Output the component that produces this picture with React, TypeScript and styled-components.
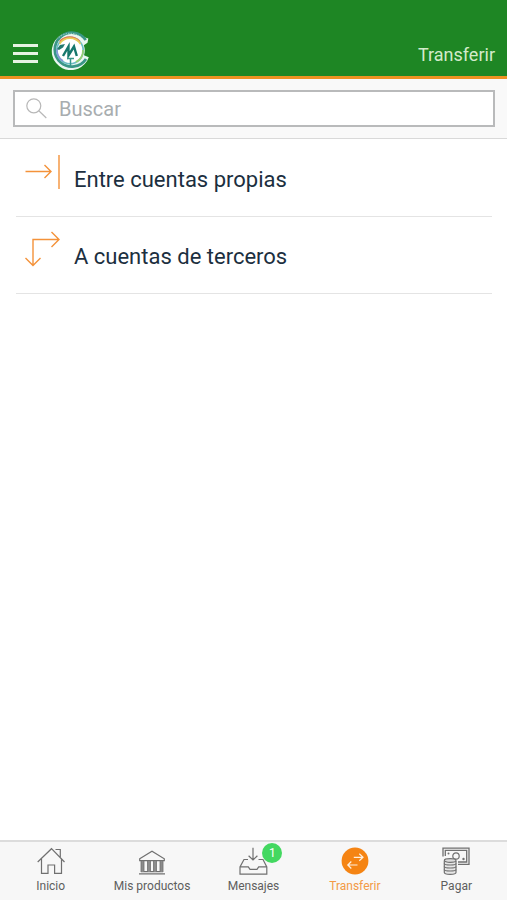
import React from "react";
import styled, { createGlobalStyle } from "styled-components";

const GlobalStyle = createGlobalStyle`
  * { box-sizing: border-box; }
  body {
    margin: 0;
    background: #fff;
    font-family: Roboto, "Open Sans", sans-serif;
  }
`;

const Screen = styled.div`
  display: flex;
  flex-direction: column;
  min-height: 100vh;
`;

const Header = styled.header`
  display: flex;
  align-items: center;
  gap: 12px;
  padding: 30px 12px 6px 13px;
  background: #1e8624;
  border-bottom: 3px solid #ee9222;
`;

const MenuButton = styled.button`
  display: flex;
  flex-direction: column;
  gap: 5px;
  width: 25px;
  padding: 7px 0 0;
  border: 0;
  background: none;
`;

const MenuLine = styled.span`
  height: 3px;
  background: #e6f3e2;
`;

const Title = styled.h1`
  margin: 10px 0 0 auto;
  color: #d3ebcb;
  font-size: 18px;
  font-weight: 400;
  line-height: 24px;
`;

const SearchBar = styled.div`
  padding: 11px 12px 11px 13px;
  background: #f9f9f9;
  border-bottom: 1px solid #d9d9d9;
`;

const SearchField = styled.label`
  display: flex;
  align-items: center;
  gap: 12px;
  height: 37px;
  padding: 0 11px;
  border: 2px solid #b9babb;
  background: #fff;
`;

const SearchInput = styled.input`
  flex: 1;
  min-width: 0;
  padding: 0;
  border: 0;
  outline: 0;
  background: none;
  color: #1c2f40;
  font: 400 20px/28px Roboto, "Open Sans", sans-serif;

  &::placeholder {
    color: #a8adaf;
    opacity: 1;
  }
`;

const OptionList = styled.main`
  flex: 1;
  padding: 1px 15px 0 16px;
`;

const Option = styled.a`
  display: flex;
  gap: 14px;
  height: 77px;
  padding: 14px 0 0 8px;
  border-bottom: 1px solid #e4e4e4;
  color: #1c2f40;
  font-size: 22px;
  line-height: 28px;
  text-decoration: none;
`;

const OptionText = styled.span`
  padding-top: 12px;
`;

const TabBar = styled.nav`
  display: grid;
  grid-template-columns: repeat(5, 1fr);
  height: 60px;
  border-top: 2px solid #dcdcdc;
  background: #f7f7f7;
`;

const Tab = styled.a<{ $active?: boolean }>`
  display: flex;
  flex-direction: column;
  align-items: center;
  gap: 3px;
  padding-top: 5px;
  color: ${(p) => (p.$active ? "#f39a45" : "#5e5e5e")};
  font-size: 12px;
  line-height: 16px;
  text-decoration: none;
  white-space: nowrap;
`;

const IconHolder = styled.span`
  position: relative;
  display: flex;
`;

const Badge = styled.span`
  position: absolute;
  top: -4px;
  right: -13px;
  width: 20px;
  height: 20px;
  border-radius: 50%;
  background: #43d860;
  color: #fff;
  font-size: 12px;
  line-height: 20px;
  text-align: center;
`;

const TabIcon = styled.svg.attrs({ viewBox: "0 0 32 28", "aria-hidden": true })`
  display: block;
  width: 32px;
  height: 28px;
  fill: none;
  stroke: #707070;
  stroke-width: 1.2;
`;

const OptionIcon = styled.svg.attrs({ viewBox: "0 0 36 36", "aria-hidden": true })`
  flex: none;
  width: 36px;
  height: 36px;
  fill: none;
  stroke: #f4923a;
  stroke-width: 1.4;
`;

const Logo = () => (
  <svg width="40" height="40" viewBox="0 0 40 40" role="img" aria-label="Logo">
    <path
      d="M33.5 7L38.3 8.5L37.5 12.8L33.8 15.2A15 15 0 0 1 34 25.2L38.8 27.2A19 19 0 1 1 33.5 7Z"
      fill="#eaf6f1"
    />
    <path d="M35.8 10A17 17 0 1 0 36 29" fill="none" stroke="#3a9686" strokeWidth="2.8" />
    <path d="M33 9A17 17 0 0 0 8 8.5" fill="none" stroke="#b9ddd5" strokeWidth=".8" strokeDasharray="1.5 1" />
    <circle cx="20" cy="20.5" r="13.2" fill="#fff" stroke="#6bbcc4" strokeWidth="1.6" />
    <path d="M10 11.5A13.5 13.5 0 0 1 29.5 11.5" fill="none" stroke="#e5764f" strokeWidth="2.2" />
    <path d="M9.5 14A12.3 12.3 0 0 1 30.5 14" fill="none" stroke="#e8cf58" strokeWidth="1.6" />
    <path d="M7 19A13 13 0 0 0 13 31" fill="none" stroke="#8496d4" strokeWidth="1.6" />
    <path d="M26 32A13 13 0 0 0 33 20" fill="none" stroke="#98cf74" strokeWidth="1.8" />
    <path d="M7 19L10 15L15 14L13 17.5L9 20Z" fill="#247b70" />
    <path d="M13 26L18.5 16.5V25.5L24 16.5L26.8 26" fill="none" stroke="#16776c" strokeWidth="2.4" />
    <path d="M17 28.5H24M20.5 28V37" stroke="#38978b" strokeWidth="1.5" />
  </svg>
);

const SearchIcon = () => (
  <svg width="21" height="21" viewBox="0 0 21 21" fill="none" stroke="#b8b8b8" strokeWidth="1.2" aria-hidden="true">
    <circle cx="7.8" cy="7.8" r="7" />
    <path d="M12.8 12.8L20.3 20" />
  </svg>
);

const HomeIcon = () => (
  <TabIcon>
    <path d="M2.7 15L16.5 1.7L29.5 15M20.5 2.5H25.3V10M6.5 12V26.4H13V18H19.6V26.4H26.5V12" />
  </TabIcon>
);

const BankIcon = () => (
  <TabIcon>
    <path d="M3.7 11.8L16 4.3L28.3 11.8V13.6H3.7ZM5 24.7H27M3 26.9H29" />
    <path d="M6.5 14V25M13 14V25M19 14V25M25.5 14V25" stroke="#8b8b8b" strokeWidth="3" />
    <path d="M5 14V25M8 14V25M11.5 14V25M14.5 14V25M17.5 14V25M20.5 14V25M24 14V25M27 14V25" strokeWidth=".8" />
  </TabIcon>
);

const InboxIcon = () => (
  <TabIcon>
    <path d="M11 12.5H7L3 20V27.2H29.8V20L26 12.5H21.5M3 19.8H11.3L13 22.4H20L21.7 19.8H29.8M16 .7V12.8M11.6 8.7L16 13L20.4 8.7" />
  </TabIcon>
);

const TransferIcon = () => (
  <TabIcon>
    <circle cx="16" cy="14" r="13.4" fill="#f58413" stroke="none" />
    <path d="M14.8 10.3H24M20.3 6.8L24 10.3L20.3 13.8M18.5 18H8.8M12.3 14.5L8.8 18L12.3 21.5" stroke="#fff0df" />
  </TabIcon>
);

const PayIcon = () => (
  <TabIcon>
    <path d="M3 9.5V1.1H29V17.3H18M5.3 9V3.4H26.7V15H18" strokeWidth="1.3" />
    <circle cx="16" cy="9" r="3.2" />
    <circle cx="8.5" cy="6.5" r="1" fill="#707070" stroke="none" />
    <circle cx="23.5" cy="12" r="1.2" fill="#707070" stroke="none" />
    <path d="M4.3 14V25.5C4.3 28 16 28 16 25.5V14" fill="#e6e6e6" />
    <ellipse cx="10.15" cy="13.5" rx="5.85" ry="1.8" fill="#ddd" />
    <path d="M4.3 16.5C4.3 18.5 16 18.5 16 16.5M4.3 19.5C4.3 21.5 16 21.5 16 19.5M4.3 22.5C4.3 24.5 16 24.5 16 22.5" />
  </TabIcon>
);

const tabs = [
  { label: "Inicio", icon: <HomeIcon /> },
  { label: "Mis productos", icon: <BankIcon /> },
  { label: "Mensajes", icon: <InboxIcon />, badge: 1 },
  { label: "Transferir", icon: <TransferIcon />, active: true },
  { label: "Pagar", icon: <PayIcon /> },
];

export default function App() {
  return (
    <Screen>
      <GlobalStyle />
      <Header>
        <MenuButton type="button" aria-label="Menú">
          <MenuLine />
          <MenuLine />
          <MenuLine />
        </MenuButton>
        <Logo />
        <Title>Transferir</Title>
      </Header>
      <SearchBar>
        <SearchField>
          <SearchIcon />
          <SearchInput type="search" placeholder="Buscar" aria-label="Buscar" />
        </SearchField>
      </SearchBar>
      <OptionList>
        <Option href="#propias">
          <OptionIcon>
            <path d="M1.5 17.5H27M20.5 11L27 17.5L20.5 24M35 1V35" />
          </OptionIcon>
          <OptionText>Entre cuentas propias</OptionText>
        </Option>
        <Option href="#terceros">
          <OptionIcon>
            <path d="M9 34.5V8.5H35M27.5 1L35 8.5L27.5 16M1.5 27L9 34.5L16.5 27" />
          </OptionIcon>
          <OptionText>A cuentas de terceros</OptionText>
        </Option>
      </OptionList>
      <TabBar>
        {tabs.map((tab) => (
          <Tab
            key={tab.label}
            href={"#" + tab.label}
            $active={tab.active}
            aria-current={tab.active ? "page" : undefined}
          >
            <IconHolder>
              {tab.icon}
              {tab.badge && <Badge>{tab.badge}</Badge>}
            </IconHolder>
            {tab.label}
          </Tab>
        ))}
      </TabBar>
    </Screen>
  );
}
